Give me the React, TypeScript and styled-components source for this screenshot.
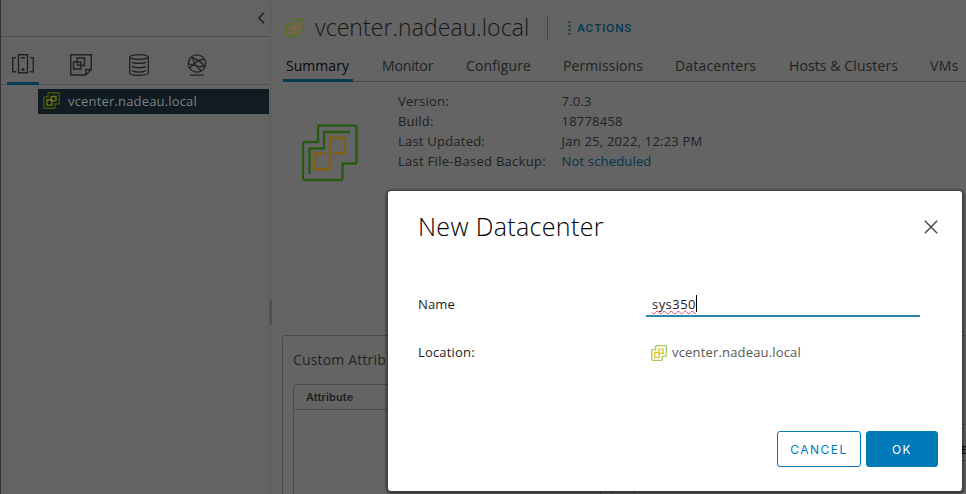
import React from "react";
import styled, { createGlobalStyle, css } from "styled-components";

const GlobalStyle = createGlobalStyle`
  * { box-sizing: border-box; }
  body { margin: 0; overflow: hidden; background: #646464; font-family: "Open Sans", "Noto Sans", sans-serif; font-size: 13px; color: #292c2e; }
  button, input { font-family: inherit; }
`;

const Page = styled.div`
  display: flex;
  position: relative;
  width: 966px;
  height: 494px;
  overflow: hidden;
  background: #646464;
`;

const Sidebar = styled.aside`
  width: 269px;
  flex: none;
  border-left: 1px solid #353535;
  background: #636363;
`;

const SidebarTop = styled.div`
  display: flex;
  justify-content: flex-end;
  height: 37px;
  border-bottom: 1px solid #4d4d4d;
  padding: 12px 4px 0 0;
`;

const NavIcons = styled.nav`
  display: flex;
  gap: 26px;
  height: 48px;
  padding-left: 6px;
  border-bottom: 1px solid #4f5051;
`;

const NavItem = styled.div<{ $active?: boolean }>`
  display: flex;
  justify-content: center;
  width: 32px;
  height: 48px;
  padding-top: 17px;
  border-bottom: ${(p) => (p.$active ? "3px solid #083c55" : "0")};
`;

const TreeNode = styled.div`
  display: flex;
  align-items: center;
  height: 25px;
  margin: 4px 0 0 37px;
  padding: 0 0 2px 5px;
  gap: 8px;
  background: #101c22;
  color: #7d8184;
  letter-spacing: 0.17px;
`;

const Splitter = styled.div`
  display: flex;
  align-items: flex-start;
  width: 3px;
  flex: none;
  padding-top: 300px;
  background: #606060;
`;

const Grip = styled.div`
  width: 3px;
  height: 25px;
  background: #505050;
`;

const Main = styled.main`
  flex: 1;
  min-width: 0;
  padding-left: 10px;
`;

const Header = styled.header`
  display: flex;
  align-items: center;
  height: 52px;
  padding: 3px 0 0 4px;
`;

const Title = styled.h1`
  margin: -2px 0 0 11px;
  width: 215px;
  font-size: 23px;
  font-weight: 300;
  line-height: 30px;
  letter-spacing: 0.07px;
  color: #151617;
`;

const Divider = styled.div`
  width: 1px;
  height: 26px;
  margin-left: 17px;
  background: #444;
`;

const Actions = styled.button`
  display: flex;
  align-items: center;
  gap: 6px;
  margin-left: 20px;
  padding: 0;
  border: 0;
  background: none;
  color: #0a3a52;
  font: 600 11px "Inter", sans-serif;
  letter-spacing: 0.75px;
`;

const Tabs = styled.div`
  display: grid;
  grid-template-columns: 96px 84px 97px 112px 114px 141px 36px;
  height: 30px;
  margin-left: 1px;
  padding-left: 3px;
  border-bottom: 1px solid #484848;
`;

const Tab = styled.span<{ $active?: boolean; $spacing: number }>`
  justify-self: start;
  position: relative;
  height: 30px;
  line-height: 27px;
  font-size: 14px;
  white-space: nowrap;
  letter-spacing: ${(p) => p.$spacing}px;
  color: ${(p) => (p.$active ? "#080808" : "#202223")};
  ${(p) =>
    p.$active &&
    css`
      &::after {
        content: "";
        position: absolute;
        left: -3px;
        right: -4px;
        bottom: 0;
        height: 3px;
        background: #063b50;
      }
    `}
`;

const Summary = styled.section`
  display: flex;
  height: 253px;
  padding: 9px 0 0 20px;
`;

const ProductIcon = styled.div`
  width: 96px;
  padding-top: 33px;
`;

const Details = styled.dl`
  display: grid;
  grid-template-columns: 163.5px auto;
  grid-auto-rows: 20px;
  align-content: start;
  margin: 0;
  line-height: 20px;
  letter-spacing: 0.22px;
  color: #1f2122;
  dd { margin: 0; }
`;

const LongTerm = styled.dt`
  letter-spacing: 0.28px;
`;

const ValueLink = styled.a`
  color: #06334b;
  letter-spacing: 0.17px;
`;

const Cards = styled.div`
  display: flex;
  gap: 22px;
`;

const Card = styled.section`
  flex: none;
  height: 170px;
  width: 330px;
  border: 1px solid #4b4b4b;
  border-radius: 3px;
  padding: 13px 10px;
`;

const SideCard = styled(Card)`
  width: 400px;
  padding: 88px 0 0;
`;

const SideRow = styled.div`
  height: 37px;
  padding-left: 326px;
  border-top: 1px solid #4b4b4b;
  border-bottom: 1px solid #4b4b4b;
  font: 600 11px/51px "Inter", sans-serif;
  color: #101010;
`;

const CardTitle = styled.h2`
  margin: 0;
  font-size: 14px;
  font-weight: 400;
  line-height: 22px;
  letter-spacing: 0.17px;
  color: #222425;
`;

const Table = styled.div`
  height: 120px;
  margin-top: 13px;
  border: 1px solid #4b4b4b;
  border-radius: 3px 0 0 0;
`;

const TableHead = styled.div`
  height: 25px;
  padding-left: 12px;
  border-bottom: 1px solid #4b4b4b;
  font: 600 11px/24px "Inter", sans-serif;
  letter-spacing: 0.1px;
  color: #1d1f20;
`;

const Dialog = styled.div`
  position: absolute;
  left: 388px;
  top: 191px;
  display: flex;
  flex-direction: column;
  width: 574px;
  height: 300px;
  padding: 21px 24px 24px 30px;
  border-radius: 3px;
  background: #fff;
  box-shadow: 0 1px 3px 2px rgba(20, 20, 20, 0.55);
  color: #1b1b1b;
`;

const DialogHead = styled.div`
  display: flex;
  justify-content: space-between;
  align-items: center;
  height: 30px;
  margin-bottom: 48px;
`;

const DialogTitle = styled.h3`
  margin: -2px 0 0;
  font-size: 25px;
  font-weight: 300;
  line-height: 30px;
  letter-spacing: 0.34px;
  color: #000;
`;

const Field = styled.div`
  display: grid;
  grid-template-columns: 228px 274px;
  height: 48px;
  line-height: 29px;
  letter-spacing: 0.18px;
`;

const NameInput = styled.div`
  display: flex;
  align-items: center;
  height: 27px;
  padding: 2px 0 0 6px;
  border-bottom: 2px solid #2b87a8;
`;

const InputText = styled.span`
  line-height: 16px;
  letter-spacing: 0.45px;
  text-decoration: underline wavy #d9485a 1px;
  text-decoration-skip-ink: none;
  text-underline-offset: 1px;
`;

const Caret = styled.i`
  width: 1px;
  height: 17px;
  background: #000;
`;

const Location = styled.div`
  display: flex;
  align-items: center;
  gap: 5px;
  padding-left: 5px;
  height: 29px;
  color: #565656;
  letter-spacing: 0.17px;
`;

const Footer = styled.div`
  display: flex;
  justify-content: flex-end;
  gap: 5px;
  margin-top: auto;
`;

const Button = styled.button<{ $primary?: boolean }>`
  width: ${(p) => (p.$primary ? 72 : 84)}px;
  height: 36px;
  padding: 1px 0 0;
  border: 1px solid #0079b8;
  border-radius: 3px;
  background: ${(p) => (p.$primary ? "#0079b8" : "#fff")};
  color: ${(p) => (p.$primary ? "#fff" : "#0079b8")};
  font: 400 12px "Inter", sans-serif;
  letter-spacing: 1.5px;
`;

const VCenterIcon = ({ size, outer, inner }: { size: number; outer: string; inner: string }) => (
  <svg width={size} height={size} viewBox="0 0 16 16" fill="none" strokeWidth="1.3">
    <path stroke={outer} d="M5.500.7h9q.8 0 .8.8v9q0 .8-.8.8h-3.200v3.200q0 .8-.8.8h-9q-.8 0-.8-.8v-9q0-.8.8-.8h3.200V1.500q0-.8.8-.8z" />
    <path stroke={inner} d="M7.800 4.200h4.400v4.200H7.800V4.200zM3.700 7.500h4.700v4.800H3.700z" />
  </svg>
);

const ProductLogo = () => (
  <svg width="56" height="58" viewBox="0 0 56 58" fill="none" strokeWidth="2.3">
    <path stroke="#275a10" d="M18 1.500h34.500q2 0 2 2v34q0 2-2 2H40.500V54q0 2-2 2H3q-2 0-2-2V20q0-2 2-2h13V3.500q0-2 2-2z" />
    <path stroke="#275a10" d="M48 8H22v16.500H7.500V50" />
    <path stroke="#80600f" d="M24 29.500H13V45h15V14h14.500v15H31" />
  </svg>
);

const HostsIcon = () => (
  <svg width="22" height="20" viewBox="0 0 22 20" fill="none" stroke="#222" strokeWidth="1.400">
    <path d="M6.500.7h9v18h-9zM9 3.700h4M4 3.600H.7v14.200H4M18 3.600h3.300v14.200H18" />
    <circle cx="11" cy="15.500" r=".8" fill="#222" />
  </svg>
);

const VmsIcon = () => (
  <svg width="22" height="22" viewBox="0 0 22 22" fill="none" stroke="#222" strokeWidth="1.400">
    <path d="M.7.700h20.600v14.800l-5.500 5.500H.7zM21.300 15.500h-5.500V21" />
    <path d="M7 8V4h7.500v7.500H11M3.500 8H11v7H3.500zM7.500 8v3H11" />
  </svg>
);

const StorageIcon = () => (
  <svg width="20" height="22" viewBox="0 0 20 22" fill="none" stroke="#222" strokeWidth="1.300">
    <ellipse cx="10" cy="3" rx="9.300" ry="2.300" />
    <path d="M.7 3v16c0 1.300 4 2.300 9.300 2.300s9.300-1 9.300-2.300V3M3 8.300c4 1.300 10 1.300 14 0M3 12.600c4 1.300 10 1.300 14 0M3 16.900c4 1.300 10 1.300 14 0" />
  </svg>
);

const NetworkIcon = () => (
  <svg width="20" height="22" viewBox="0 0 20 22" fill="none" stroke="#222" strokeWidth="1.300">
    <circle cx="10" cy="9.500" r="8.700" />
    <path d="M4 3.500Q12 5 18 13M17.200 5Q9 6 2.700 14.200M5.500 2.500Q6 10 14.500 17M1.500 9.500Q9 14 18 12M3 21.200h14" />
  </svg>
);

const tabs: [string, number][] = [
  ["Summary", 0.04],
  ["Monitor", -0.15],
  ["Configure", 0.13],
  ["Permissions", 0.08],
  ["Datacenters", 0.19],
  ["Hosts & Clusters", 0.1],
  ["VMs", 0.4],
];

export default function App() {
  return (
    <Page>
      <GlobalStyle />
      <Sidebar>
        <SidebarTop>
          <svg width="7" height="12" viewBox="0 0 7 12" fill="none" stroke="#1c1c1c" strokeWidth="1.400"><path d="M6 .8.9 6 6 11.200" /></svg>
        </SidebarTop>
        <NavIcons>
          <NavItem $active><HostsIcon /></NavItem>
          <NavItem><VmsIcon /></NavItem>
          <NavItem><StorageIcon /></NavItem>
          <NavItem><NetworkIcon /></NavItem>
        </NavIcons>
        <TreeNode>
          <VCenterIcon size={17} outer="#3b5a0b" inner="#77750b" />
          <span>vcenter.nadeau.local</span>
        </TreeNode>
      </Sidebar>
      <Splitter><Grip /></Splitter>
      <Main>
        <Header>
          <VCenterIcon size={18} outer="#5d7022" inner="#856a24" />
          <Title>vcenter.nadeau.local</Title>
          <Divider />
          <Actions>
            <svg width="3" height="14" viewBox="0 0 3 14" fill="#0a3a52"><path d="M.5 0h2v2h-2zM.5 4h2v2h-2zM.5 8h2v2h-2zM.5 12h2v2h-2z" /></svg>
            ACTIONS
          </Actions>
        </Header>
        <Tabs>
          {tabs.map(([label, spacing], i) => (
            <Tab key={label} $active={i === 0} $spacing={spacing}>{label}</Tab>
          ))}
        </Tabs>
        <Summary>
          <ProductIcon><ProductLogo /></ProductIcon>
          <Details>
            <dt>Version:</dt><dd>7.0.3</dd>
            <dt>Build:</dt><dd>18778458</dd>
            <dt>Last Updated:</dt><dd>Jan 25, 2022, 12:23 PM</dd>
            <LongTerm>Last File-Based Backup:</LongTerm><dd><ValueLink>Not scheduled</ValueLink></dd>
          </Details>
        </Summary>
        <Cards>
          <Card>
            <CardTitle>Custom Attrib</CardTitle>
            <Table><TableHead>Attribute</TableHead></Table>
          </Card>
          <SideCard>
            <SideRow>E</SideRow>
          </SideCard>
        </Cards>
      </Main>
      <Dialog role="dialog">
        <DialogHead>
          <DialogTitle>New Datacenter</DialogTitle>
          <svg width="14" height="14" viewBox="0 0 14 14" stroke="#444" strokeWidth="1.400"><path d="m.8.8 12.400 12.400M13.200.8.8 13.200" /></svg>
        </DialogHead>
        <Field>
          <span>Name</span>
          <NameInput><InputText>sys350</InputText><Caret /></NameInput>
        </Field>
        <Field>
          <span>Location:</span>
          <Location>
            <VCenterIcon size={16} outer="#a3cf5c" inner="#e3c62c" />
            <span>vcenter.nadeau.local</span>
          </Location>
        </Field>
        <Footer>
          <Button>CANCEL</Button>
          <Button $primary>OK</Button>
        </Footer>
      </Dialog>
    </Page>
  );
}
